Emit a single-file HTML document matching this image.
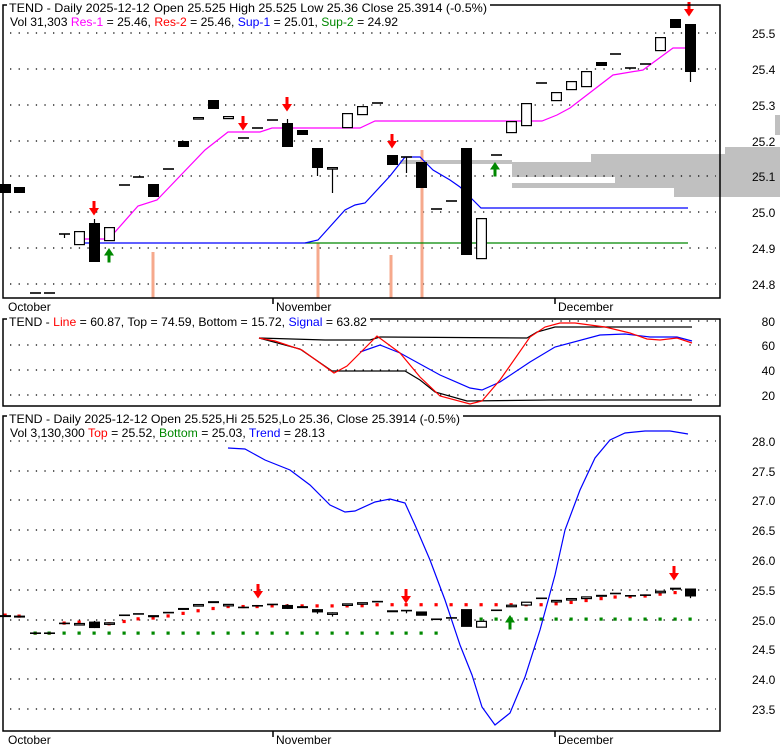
<!DOCTYPE html>
<html><head><meta charset="utf-8"><style>
html,body{margin:0;padding:0;background:#fff;}
svg{display:block;font-family:"Liberation Sans",sans-serif;font-size:12px;}
</style></head><body>
<svg id="s" width="780" height="745" xmlns="http://www.w3.org/2000/svg">
<rect width="780" height="745" fill="#fff"/>
<g fill="#c0c0c0">
<rect x="400" y="160" width="112" height="4"/>
<rect x="512" y="162" width="80" height="26"/>
<rect x="591" y="154" width="134" height="34"/>
<rect x="674" y="188" width="51" height="9"/>
<rect x="725" y="147" width="55" height="50"/>
<rect x="775" y="115" width="5" height="20"/>
</g>
<rect x="512" y="177" width="103" height="6" fill="#fff"/>
<g id="grid" stroke="#000" stroke-width="1.3" stroke-dasharray="1.3 7.3"></g>
<g id="content"></g>
<g fill="none" stroke="#000" stroke-width="1.5">
<rect x="3" y="5" width="717" height="293"/>
<rect x="3" y="319" width="717" height="87"/>
<rect x="3" y="416" width="717" height="315"/>
<line x1="273" y1="298" x2="273" y2="304"/><line x1="555" y1="298" x2="555" y2="304"/>
<line x1="273" y1="731" x2="273" y2="737"/><line x1="555" y1="731" x2="555" y2="737"/>
</g>
<g fill="#fff">
<rect x="7" y="0" width="483" height="14"/>
<rect x="7" y="313" width="363" height="14"/>
<rect x="7" y="410" width="456" height="14"/>
</g>
<g fill="#000">
<text x="9" y="12" textLength="478" lengthAdjust="spacingAndGlyphs">TEND - Daily 2025-12-12 Open 25.525  High 25.525  Low 25.36  Close 25.3914 (-0.5%)</text>
<text x="10" y="26" textLength="388" lengthAdjust="spacingAndGlyphs">Vol 31,303 <tspan fill="#f0f">Res-1</tspan> = 25.46, <tspan fill="#f00">Res-2</tspan> = 25.46, <tspan fill="#00f">Sup-1</tspan> = 25.01, <tspan fill="#080">Sup-2</tspan> = 24.92</text>
<text x="9" y="326" textLength="358" lengthAdjust="spacingAndGlyphs">TEND - <tspan fill="#f00">Line</tspan> = 60.87, Top = 74.59, Bottom = 15.72, <tspan fill="#00f">Signal</tspan> = 63.82</text>
<text x="9" y="423" textLength="451" lengthAdjust="spacingAndGlyphs">TEND - Daily 2025-12-12 Open 25.525,Hi 25.525,Lo 25.36, Close 25.3914 (-0.5%)</text>
<text x="10" y="437" textLength="315" lengthAdjust="spacingAndGlyphs">Vol 3,130,300 <tspan fill="#f00">Top</tspan> = 25.52, <tspan fill="#080">Bottom</tspan> = 25.03, <tspan fill="#00f">Trend</tspan> = 28.13</text>
<text x="8" y="311">October</text><text x="276" y="311">November</text><text x="558" y="311">December</text>
<text x="8" y="744">October</text><text x="276" y="744">November</text><text x="558" y="744">December</text>
</g>
<g id="labels" fill="#000"></g>
</svg>
<script>
var NS="http://www.w3.org/2000/svg",C=document.getElementById("content"),G=document.getElementById("grid"),L=document.getElementById("labels");
function el(t,a,p){var e=document.createElementNS(NS,t);for(var k in a)e.setAttribute(k,a[k]);(p||C).appendChild(e);return e;}
// grids
[33,69,105,141,176,212,248,284,321,345,370,395,441,471,500,530,560,590,620,649,679,709].forEach(function(y){el("line",{x1:10,y1:y,x2:716,y2:y},G);});
// labels
var tl=[["25.5",33],["25.4",69],["25.3",105],["25.2",141],["25.1",176],["25.0",212],["24.9",248],["24.8",284]];
tl.forEach(function(a){el("text",{x:752,y:a[1]+5},L).textContent=a[0];});
[["80",321],["60",345],["40",370],["20",395]].forEach(function(a){el("text",{x:775,y:a[1]+5,"text-anchor":"end"},L).textContent=a[0];});
[["28.0",441],["27.5",471],["27.0",500],["26.5",530],["26.0",560],["25.5",590],["25.0",620],["24.5",649],["24.0",679],["23.5",709]].forEach(function(a){el("text",{x:752,y:a[1]+5},L).textContent=a[0];});
// volume bars
[[153,252],[318,243],[391,255],[422,150]].forEach(function(v){el("rect",{x:v[0]-1.5,y:v[1],width:3,height:298-v[1],fill:"#f6a98c"});});
function poly(pts,col,w){el("polyline",{points:pts.map(function(p){return p.join(",")}).join(" "),fill:"none",stroke:col,"stroke-width":w||1.2});}
var pink=[[85,239],[104,239],[115,232],[138,206],[157,200],[205,150],[228,132],[260,132],[272,128],[360,128],[375,121],[542,121],[557,115],[570,108],[613,75],[643,70],[673,48],[693,48]];
poly(pink,"#f0f");
poly([[85,243],[305,243]],"#00f");
poly([[305,243],[688,243]],"#080");
poly([[305,243],[318,240],[345,210],[355,205],[365,203],[390,176],[405,157],[420,157],[433,170],[450,180],[460,187],[475,202],[481,208],[688,208]],"#00f");
// panel2
poly([[259,338],[325,340],[370,340],[380,337],[527,338],[537,332],[555,327],[692,327]],"#000");
poly([[259,338],[300,349],[332,371],[405,371],[420,380],[435,392],[467,401],[550,400],[692,400]],"#000");
poly([[360,352],[380,345],[400,353],[440,375],[470,388],[482,390],[500,382],[530,362],[555,347],[600,335],[625,334],[650,337],[677,337],[692,341]],"#00f");
poly([[259,338],[275,341],[302,350],[334,373],[347,366],[377,336],[400,353],[420,377],[440,396],[470,404],[482,401],[500,380],[530,337],[545,327],[560,323],[575,323],[605,327],[630,333],[647,339],[660,340],[677,338],[692,343]],"#f00");
// bottom trend
poly([[228,448],[245,449],[265,460],[290,470],[310,485],[330,505],[345,512],[355,511],[375,502],[390,499],[405,503],[415,525],[430,560],[445,600],[460,645],[472,675],[482,707],[495,725],[510,713],[525,677],[540,630],[555,575],[565,530],[580,490],[595,458],[610,440],[625,433],[645,431],[670,431],[688,434]],"#00f");
function mp(y){return 590+(y-33)*0.1662;}
function pinkAt(x){for(var i=0;i<pink.length-1;i++){var a=pink[i],b=pink[i+1];if(x>=a[0]&&x<=b[0]){return a[1]+(b[1]-a[1])*(x-a[0])/(b[0]-a[0]);}}return pink[pink.length-1][1];}
var cs=[[0,184,193,'f'],[14,187,193,'f'],[30,293,293,'d'],[44,293,293,'d'],[59,234,234,'d',234,238],[74,231,245,'h'],[89,223,262,'f',219,262],[104,227,241,'h'],[119,185,185,'d'],[133,177,177,'d'],[148,184,197,'f'],[163,169,169,'d'],[178,141,147,'f'],[193,117,119,'h'],[208,100,109,'f'],[223,116,119,'h'],[238,138,138,'d'],[252,128,128,'d'],[267,120,120,'d'],[282,123,147,'f',119,147],[297,130,135,'f'],[312,148,168,'f',148,176],[327,167,169,'h',167,193],[342,113,128,'h'],[357,106,115,'h'],[372,103,103,'d'],[387,155,165,'f'],[401,157,157,'d',157,173],[416,162,188,'f'],[431,209,209,'d'],[446,201,201,'d'],[461,148,255,'f'],[476,218,259,'h'],[491,155,155,'d'],[506,121,133,'h'],[521,103,126,'h'],[536,83,83,'d'],[551,92,101,'h'],[566,81,90,'h'],[581,71,87,'h'],[596,62,66,'f'],[610,54,54,'d'],[625,68,68,'d'],[640,64,64,'d'],[655,37,51,'h'],[670,19,28,'f'],[685,24,72,'f',24,82]];
// bottom dots
var manualR={0:615,14:616,30:633,44:633,59:623,74:622};
cs.forEach(function(c){var cx=c[0]+5;var ry=(c[0] in manualR)?manualR[c[0]]:mp(pinkAt(cx));el("rect",{x:cx-1.5,y:ry-1.5,width:3.2,height:3.2,fill:"#f00"});
 var gy=null;if(c[0]<20)gy=617;else if(c[0]>=30&&c[0]<=431)gy=633;else if(c[0]>=476)gy=619;if(c[0]==0||c[0]==14)gy=null;
 if(gy)el("rect",{x:cx-1.5,y:gy-1.5,width:3.2,height:3.2,fill:"#080"});});
function candle(c,m){var x=c[0],y1=m(c[1]),y2=m(c[2]);
 if(c[4]!==undefined){el("line",{x1:x+5.5,y1:m(c[4]),x2:x+5.5,y2:m(c[5]),stroke:"#000","stroke-width":1.2});}
 if(c[3]=='d'){el("rect",{x:x,y:y1-0.8,width:11,height:1.6,fill:"#000"});}
 else if(c[3]=='f'){el("rect",{x:x,y:y1,width:11,height:Math.max(2,y2-y1),fill:"#000"});}
 else{var h=Math.max(1.5,y2-y1-1);el("rect",{x:x+0.6,y:y1+0.6,width:9.8,height:h,fill:"#fff",stroke:"#000","stroke-width":1.2});}}
cs.forEach(function(c){candle(c,function(y){return y;});candle(c,mp);});
function down(cx,y0){el("path",{d:"M"+(cx-1.5)+" "+y0+"h3v7h3.5l-5 7.5l-5-7.5h3.5z",fill:"#f00"});}
function up(cx,y0){el("path",{d:"M"+(cx-1.5)+" "+(y0+14.5)+"h3v-7h3.5l-5-7.5l-5 7.5h3.5z",fill:"#080"});}
down(94,201);down(243,116);down(287,97);down(392,134);down(689,2);
up(109,248);up(495,162);
down(258,584);down(406,589);down(674,566);up(510,615);
</script>
</body></html>
